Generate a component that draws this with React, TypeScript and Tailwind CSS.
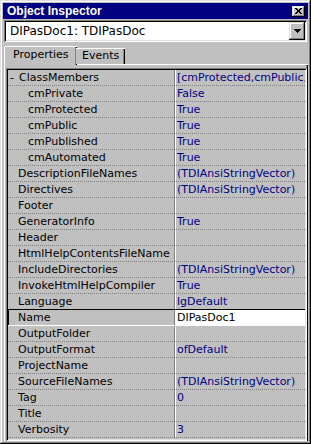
type Row = { name: string; value: string; sub?: boolean; group?: boolean; selected?: boolean };

const rows: Row[] = [
  { name: "ClassMembers", value: "[cmProtected,cmPublic,cmPublished]", group: true },
  { name: "cmPrivate", value: "False", sub: true },
  { name: "cmProtected", value: "True", sub: true },
  { name: "cmPublic", value: "True", sub: true },
  { name: "cmPublished", value: "True", sub: true },
  { name: "cmAutomated", value: "True", sub: true },
  { name: "DescriptionFileNames", value: "(TDIAnsiStringVector)" },
  { name: "Directives", value: "(TDIAnsiStringVector)" },
  { name: "Footer", value: "" },
  { name: "GeneratorInfo", value: "True" },
  { name: "Header", value: "" },
  { name: "HtmlHelpContentsFileName", value: "" },
  { name: "IncludeDirectories", value: "(TDIAnsiStringVector)" },
  { name: "InvokeHtmlHelpCompiler", value: "True" },
  { name: "Language", value: "lgDefault" },
  { name: "Name", value: "DIPasDoc1", selected: true },
  { name: "OutputFolder", value: "" },
  { name: "OutputFormat", value: "ofDefault" },
  { name: "ProjectName", value: "" },
  { name: "SourceFileNames", value: "(TDIAnsiStringVector)" },
  { name: "Tag", value: "0" },
  { name: "Title", value: "" },
  { name: "Verbosity", value: "3" },
];

const raised =
  "shadow-[inset_-1px_-1px_#000,inset_1px_1px_#dfdfdf,inset_-2px_-2px_#808080,inset_2px_2px_#fff]";
const sunken =
  "shadow-[inset_1px_1px_#808080,inset_-1px_-1px_#fff,inset_2px_2px_#000,inset_-2px_-2px_#dfdfdf]";

export default function App() {
  return (
    <div
      className={`w-[311px] h-[444px] bg-[#c0c0c0] p-[3px] flex flex-col overflow-hidden font-['DejaVu_Sans',sans-serif] text-[11px] text-black ${raised}`}
    >
      {/* Caption */}
      <div className="h-[16px] bg-[#000080] flex items-center justify-between pl-[4px] pr-[3px] shrink-0">
        <span className="text-white font-bold text-[12px] leading-none font-['Liberation_Sans',sans-serif]">
          Object Inspector
        </span>
        <div className={`w-[13px] h-[11px] bg-[#c0c0c0] flex items-center justify-center ${raised}`}>
          <svg width="7" height="6" viewBox="0 0 7 6" shapeRendering="crispEdges">
            <path d="M0 0h2v1h-2zM5 0h2v1h-2zM1 1h2v1h-2zM4 1h2v1h-2zM2 2h3v1h-3zM2 3h3v1h-3zM1 4h2v1h-2zM4 4h2v1h-2zM0 5h2v1h-2zM5 5h2v1h-2z" fill="#000" />
          </svg>
        </div>
      </div>

      {/* Component combo */}
      <div className={`mt-[1px] mx-[1px] h-[22px] bg-white flex items-center justify-between pl-[6px] pr-[2px] shrink-0 ${sunken}`}>
        <span className="text-[12px] leading-none">DIPasDoc1: TDIPasDoc</span>
        <div className={`w-[16px] h-[18px] bg-[#c0c0c0] flex items-center justify-center ${raised}`}>
          <svg width="7" height="4" viewBox="0 0 7 4" shapeRendering="crispEdges">
            <path d="M0 0h7v1h-7zM1 1h5v1h-5zM2 2h3v1h-3zM3 3h1v1h-1z" fill="#000" />
          </svg>
        </div>
      </div>

      {/* Tabs */}
      <div className="mt-[2px] h-[20px] flex items-end pl-[1px] shrink-0 relative z-10 leading-[13px]">
        <div className="h-[19px] w-[73px] bg-[#c0c0c0] border-l border-t border-white rounded-tl-[2px] shadow-[inset_-1px_0_#000,inset_-2px_0_#808080] flex items-start pl-[8px] pt-[1px] -mb-[1px]">
          Properties
        </div>
        <div className="h-[16px] w-[49px] -ml-[1px] bg-[#c0c0c0] border-t border-white shadow-[inset_-1px_0_#000,inset_-2px_0_#808080] flex items-start pl-[6px]">
          Events
        </div>
      </div>

      {/* Tab page */}
      <div className="flex-1 ml-[1px] border-t border-l border-white shadow-[inset_-1px_0_#000,inset_-2px_0_#808080] pt-[3px] pl-[1px] pr-[1px] flex flex-col min-h-0">
        <div className={`flex-1 p-[2px] overflow-hidden ${sunken}`}>
          {rows.map((r, i) => {
            const beforeSel = rows[i + 1]?.selected;
            const rowBorder = r.selected
              ? "border-b border-white"
              : beforeSel
                ? "border-b border-black"
                : "border-b border-dotted border-[#808080]";
            return (
              <div key={r.name} className={`h-[16px] flex leading-[15px] ${rowBorder}`}>
                <div
                  className={`w-[166px] shrink-0 whitespace-nowrap overflow-hidden flex ${
                    r.selected ? "border-l border-black pl-[9px]" : r.sub ? "pl-[20px]" : r.group ? "pl-[2px]" : "pl-[10px]"
                  }`}
                >
                  {r.group && <span className="w-[9px]">-</span>}
                  {r.name}
                </div>
                <div className="w-[2px] shrink-0 border-l border-[#808080] bg-white" />
                <div
                  className={`flex-1 whitespace-nowrap overflow-hidden pl-[1px] ${
                    r.selected ? "bg-white text-black" : "text-[#000080]"
                  }`}
                >
                  {r.value}
                </div>
              </div>
            );
          })}
        </div>
      </div>
    </div>
  );
}
